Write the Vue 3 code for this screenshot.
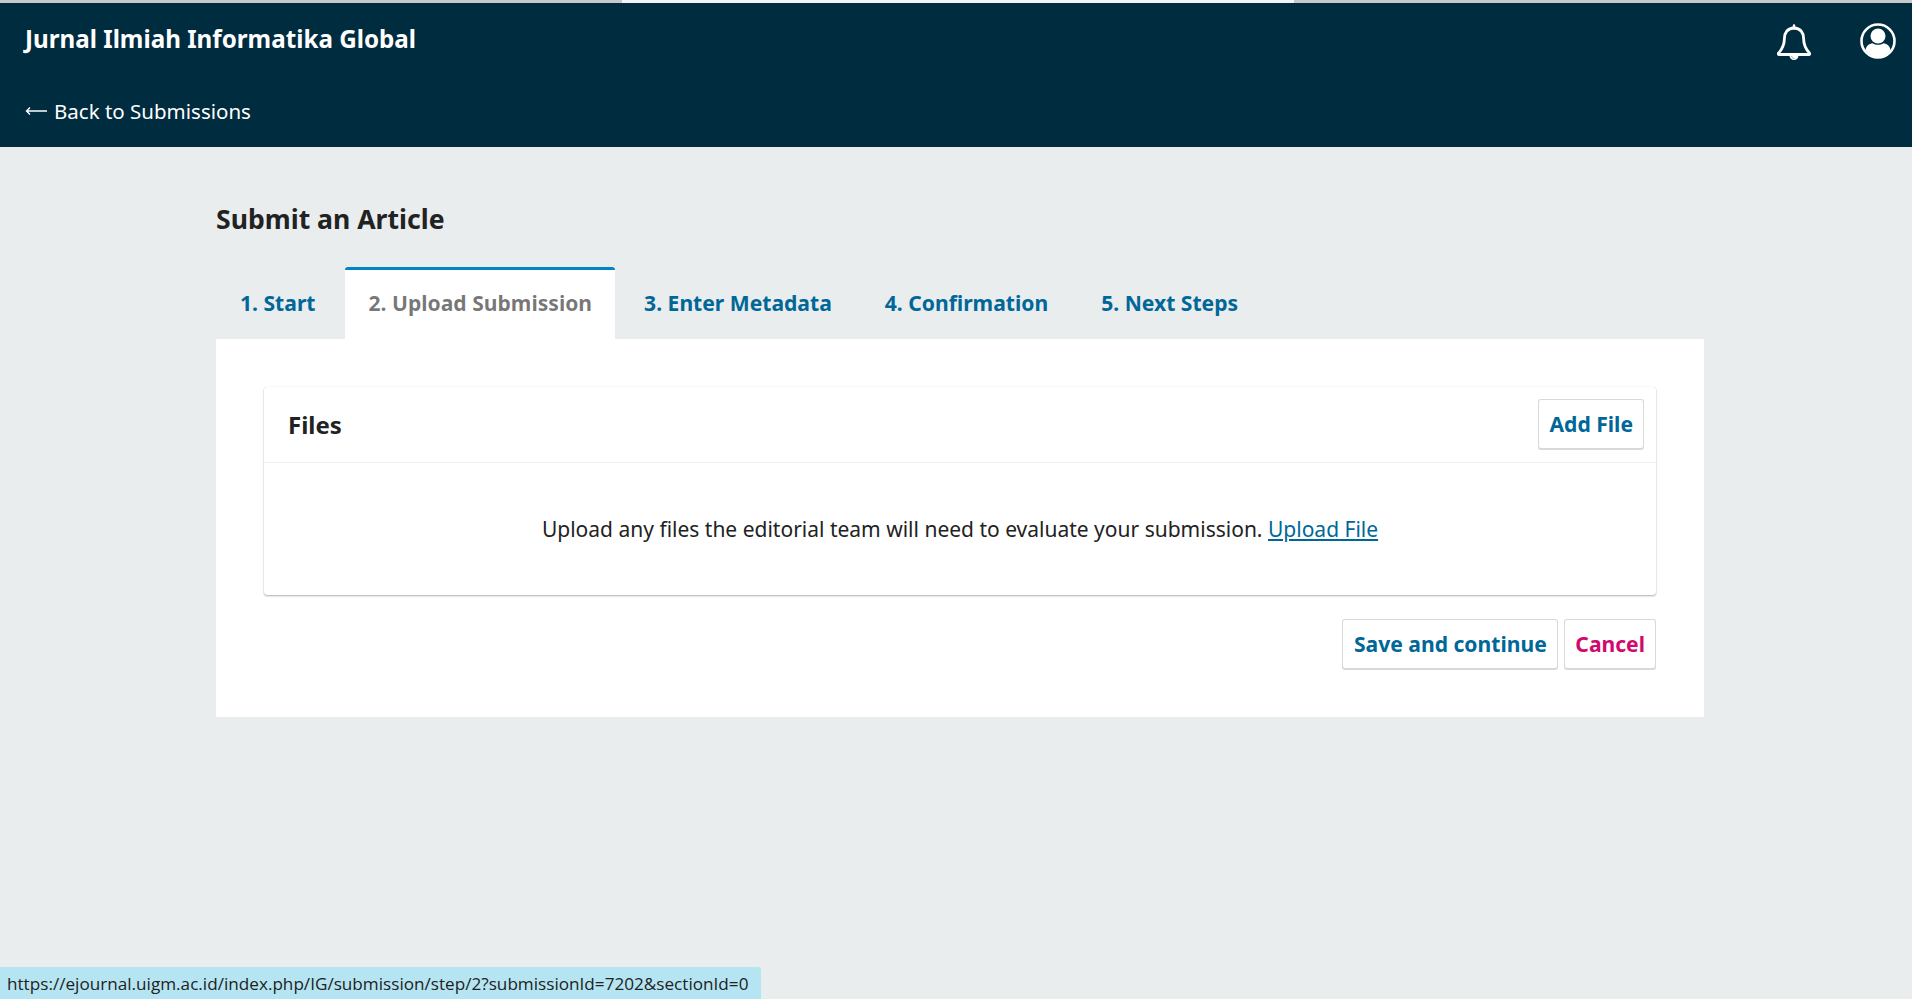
<template>
  <div class="page">
    <div class="strip"><span class="strip__mid" /></div>
    <header class="top">
      <div class="top__row">
        <a class="top__title">Jurnal Ilmiah Informatika Global</a>
        <div class="top__icons">
          <svg class="icon-bell" viewBox="0 0 34 36" width="34" height="36">
            <path d="M17 1.5v3" stroke="#fff" stroke-width="2.5" fill="none" stroke-linecap="round" />
            <path d="M17 4c-6.2 0-9.6 4.6-9.6 10.5 0 6-1.8 10.2-5.9 14.6-.6.7-.2 1.4.7 1.4h29.6c.9 0 1.3-.7.7-1.4-4.1-4.4-5.9-8.6-5.9-14.6C26.600 8.600 23.200 4 17 4z" stroke="#fff" stroke-width="2.800" fill="none" stroke-linejoin="round" />
            <path d="M12.500 31.500a4.500 4.500 0 0 0 9 0z" fill="#fff" />
            <path d="M14.500 32a3 3 0 0 0 3 2.500" stroke="#9fb1ba" stroke-width="1" fill="none" />
          </svg>
          <svg class="icon-user" viewBox="0 0 36 36" width="36" height="36">
            <circle cx="18" cy="18" r="16.500" stroke="#fff" stroke-width="2.600" fill="none" />
            <circle cx="18" cy="13" r="7.500" fill="#fff" />
            <path d="M5.600 27c.4-4.200 3.400-6.400 7-6.800 1.600 1 3.400 1.500 5.400 1.500s3.800-.5 5.400-1.500c3.600.4 6.600 2.600 7 6.800-3 4-7.400 7-12.400 7s-9.400-3-12.400-7z" fill="#fff" />
          </svg>
        </div>
      </div>
      <a class="top__back">
        <svg viewBox="0 0 22 10" width="22" height="10">
          <path d="M22 5H1.500M5 1.500 1.500 5 5 8.500" stroke="#fff" stroke-width="1.400" fill="none" />
        </svg>
        Back to Submissions
      </a>
    </header>

    <main class="main">
      <h1 class="main__title">Submit an Article</h1>
      <ul class="tabs">
        <li v-for="t in tabs" :key="t" class="tab" :class="{ 'tab--on': t === active }">{{ t }}</li>
      </ul>
      <section class="panel">
        <div class="card">
          <div class="card__head">
            <h2 class="card__title">Files</h2>
            <button class="btn">Add File</button>
          </div>
          <p class="card__empty">
            Upload any files the editorial team will need to evaluate your submission.
            <a class="card__link">Upload File</a>
          </p>
        </div>
        <div class="actions">
          <button class="btn btn--save">Save and continue</button>
          <button class="btn btn--cancel">Cancel</button>
        </div>
      </section>
    </main>

    <div class="status">https://ejournal.uigm.ac.id/index.php/IG/submission/step/2?submissionId=7202&amp;sectionId=0</div>
  </div>
</template>

<script setup>
const tabs = ['1. Start', '2. Upload Submission', '3. Enter Metadata', '4. Confirmation', '5. Next Steps']
const active = '2. Upload Submission'
</script>

<style>
html, body { margin: 0; background: #eaedee; }
</style>

<style scoped>
.page {
  min-height: 999px;
  background: #eaedee;
  font-family: "Noto Sans", sans-serif;
  color: rgba(0, 0, 0, 0.87);
  overflow: hidden;
}
.strip {
  height: 3px;
  background: #c9c9c9;
  display: flex;
  justify-content: center;
}
.strip__mid { width: 672px; margin-left: 3px; background: #f4f4f4; }

.top { height: 144px; background: #002c40; color: #fff; box-sizing: border-box; padding: 0 16px 0 25px; }
.top__row { display: flex; justify-content: space-between; height: 72px; }
.top__title { font-size: 24.2px; font-weight: 700; line-height: 32px; margin-top: 20px; }
.top__icons { display: flex; gap: 49px; margin-top: 20px; height: 40px; align-items: flex-start; }
.icon-bell { margin-top: 1px; }
.top__back { display: flex; align-items: center; gap: 7px; font-size: 20.5px; line-height: 30px; margin-top: 21px; }

.main { width: 1488px; margin-left: 216px; }
.main__title { margin: 0; padding-top: 55px; font-size: 26.6px; line-height: 35px; font-weight: 700; color: #222; }
.tabs { list-style: none; display: flex; gap: 5px; margin: 30px 0 0; padding: 0; height: 72px; }
.tab {
  padding: 0 24px;
  font-size: 21.1px;
  font-weight: 700;
  line-height: 66px;
  margin-top: 3px;
  color: #006798;
}
.tab--on {
  margin: 0 0 0 1px;
  padding: 0 23px;
  background: #fff;
  color: rgba(0, 0, 0, 0.54);
  border-top: 3px solid #0085c4;
  border-radius: 3px 3px 0 0;
}

.panel { background: #fff; padding: 48px; height: 378px; box-sizing: border-box; }
.card {
  height: 208px;
  border-radius: 3px;
  box-shadow: 0 1px 2px rgba(0, 0, 0, 0.3), 0 0 1px rgba(0, 0, 0, 0.15);
}
.card__head {
  display: flex;
  align-items: center;
  justify-content: space-between;
  padding: 0 12px 2px 24px;
  border-bottom: 1px solid #eee;
  height: 73px;
}
.card__title { margin: 2px 0 0; font-size: 24px; font-weight: 700; color: #222; }
.card__empty { margin: 0; padding-top: 50px; text-align: center; font-size: 21px; line-height: 32px; color: #222; }
.card__link { color: #006798; text-decoration: underline; }

.btn {
  height: 50px;
  padding: 0 10px;
  background: #fff;
  border: 1px solid rgba(0, 0, 0, 0.15);
  border-radius: 3px;
  box-shadow: 0 1px 0 rgba(0, 0, 0, 0.15);
  font-family: inherit;
  font-size: 21.1px;
  font-weight: 700;
  color: #006798;
}
.btn--cancel { color: #d00a6c; }
.actions { display: flex; justify-content: flex-end; gap: 6px; margin-top: 24px; }
.actions .btn { padding-bottom: 2px; }
.actions .btn--save { padding-left: 10.6px; padding-right: 10.6px; }

.status {
  position: fixed;
  left: 0;
  bottom: 0;
  width: 761px;
  height: 32px;
  box-sizing: border-box;
  padding-left: 7px;
  background: #b5e5f2;
  border-top-right-radius: 3px;
  font-family: "Open Sans", sans-serif;
  font-size: 17.15px;
  line-height: 33px;
  color: #222;
  white-space: nowrap;
}
</style>
